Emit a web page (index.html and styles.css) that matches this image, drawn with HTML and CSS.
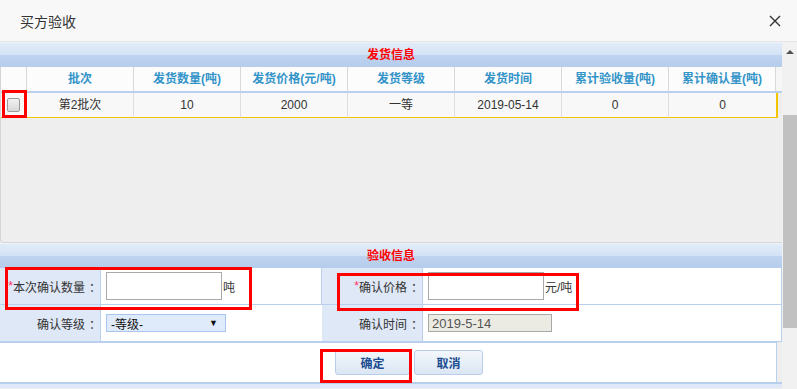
FILE: index.html
```html
<!DOCTYPE html>
<html lang="zh-CN">
<head>
    <meta charset="UTF-8">
    <title>买方验收</title>
    <link rel="stylesheet" href="styles.css">
</head>
<body>
    <div class="dialog">
        <div class="dialog-head">
            <span class="dialog-title">买方验收</span>
            <svg class="close" width="12" height="12" viewBox="0 0 12 12">
                <path d="M1 1L11 11M11 1L1 11" stroke="#333" stroke-width="1.4" fill="none"/>
            </svg>
        </div>

        <div class="dialog-body">
            <div class="content">
                <div class="bar">发货信息</div>

                <div class="grid-box">
                    <div class="grid-row grid-head">
                        <div class="cell"></div>
                        <div class="cell">批次</div>
                        <div class="cell">发货数量(吨)</div>
                        <div class="cell">发货价格(元/吨)</div>
                        <div class="cell">发货等级</div>
                        <div class="cell">发货时间</div>
                        <div class="cell">累计验收量(吨)</div>
                        <div class="cell">累计确认量(吨)</div>
                        <div class="cell fill"></div>
                    </div>
                    <div class="grid-row grid-data">
                        <div class="cell"><span class="checkbox"></span></div>
                        <div class="cell">第2批次</div>
                        <div class="cell">10</div>
                        <div class="cell">2000</div>
                        <div class="cell">一等</div>
                        <div class="cell">2019-05-14</div>
                        <div class="cell">0</div>
                        <div class="cell last">0</div>
                        <div class="cell fill"></div>
                    </div>
                </div>

                <div class="bar">验收信息</div>

                <div class="form">
                    <div class="label"><span class="req">*</span>本次确认数量<span class="colon">：</span></div>
                    <div class="value"><input class="text" type="text"><span class="unit">吨</span></div>
                    <div class="label"><span class="req">*</span>确认价格<span class="colon">：</span></div>
                    <div class="value"><input class="text" type="text"><span class="unit">元/吨</span></div>

                    <div class="label">确认等级<span class="colon">：</span></div>
                    <div class="value">
                        <div class="select"><span>-等级-</span><span class="caret">&#9660;</span></div>
                    </div>
                    <div class="label">确认时间<span class="colon">：</span></div>
                    <div class="value"><input class="text date" type="text" value="2019-5-14" disabled></div>
                </div>

                <div class="actions">
                    <button class="btn btn-ok">确定</button>
                    <button class="btn">取消</button>
                </div>
                <div class="bar-edge"></div>

                <!-- red annotation boxes -->
                <div class="mark mark-check"></div>
                <div class="mark mark-qty"></div>
                <div class="mark mark-price"></div>
                <div class="mark mark-ok"></div>
            </div>

            <div class="scrollbar">
                <span class="arrow"></span>
                <div class="thumb"></div>
            </div>
        </div>
    </div>
</body>
</html>
```

FILE: styles.css
```css
body {
    margin: 0;
    font-family: "Liberation Sans", "Noto Sans CJK SC", sans-serif;
    font-size: 12px;
    color: #333;
    background-color: #fff;
}

.dialog {
    width: 797px;
    height: 389px;
    overflow: hidden;
}

.dialog-head {
    height: 41px;
    display: flex;
    align-items: center;
    justify-content: space-between;
    padding: 0 16px 0 20px;
    background-color: #f8f8f8;
    border-bottom: 1px solid #e6e6e6;
}

.dialog-title {
    font-size: 14px;
    color: #333;
}

.dialog-body {
    display: flex;
    height: 347px;
}

.content {
    position: relative;
    width: 782px;
    background-color: #eeeeee;
}

/* Section title bar */
.bar {
    height: 24px;
    line-height: 24px;
    text-align: center;
    font-weight: bold;
    color: #ff0000;
    border-top: 1px solid #eef3fb;
    background: linear-gradient(to bottom, #e2ecf8 0%, #d3e2f5 50%, #bed3ef 52%, #b5ccec 100%);
}

/* Delivery grid */
.grid-box {
    height: 176px;
    border-left: 1px solid #d6d6d6;
    border-bottom: 1px solid #d6d6d6;
    border-bottom-left-radius: 4px;
    box-sizing: border-box;
}

.grid-row {
    display: grid;
    grid-template-columns: 26px repeat(7, 107px) 1fr;
}

.grid-row .cell {
    height: 24px;
    line-height: 24px;
    text-align: center;
    white-space: nowrap;
    box-sizing: border-box;
}

.grid-head {
    border-bottom: 2px solid #b9cfec;
}

.grid-head .cell {
    font-weight: bold;
    color: #3394c9;
    background-color: #fcfcfc;
    border-right: 1px solid #d8d8d8;
}

.grid-head .cell.fill {
    border-right: none;
    background-color: #f6f6f6;
}

.grid-data .cell {
    height: 25px;
    background-color: #f8f8f8;
    border-right: 1px solid #dedede;
    border-bottom: 1px solid #f4c400;
}

.grid-data .cell.last {
    width: 109px;
    border-right: 2px solid #f4c400;
}

.grid-data .cell.fill {
    background: none;
    border: none;
}

.checkbox {
    display: inline-block;
    width: 11px;
    height: 12px;
    margin-top: 5px;
    vertical-align: top;
    border: 1px solid #9a9a9a;
    border-radius: 2px;
    background: linear-gradient(to bottom, #f2f2f2, #d8d8d8);
}

/* Acceptance form */
.form {
    display: grid;
    grid-template-columns: 101px 221px 101px 1fr;
    grid-auto-rows: 37px;
    background-color: #fff;
    border-right: 1px solid #b9cfee;
}

.form .label, .form .value {
    display: flex;
    align-items: center;
    border-bottom: 1px solid #b9cfee;
    box-sizing: border-box;
}

.form .label {
    justify-content: flex-end;
    padding-right: 3px;
    background-color: #dfe8f6;
    border-right: 1px solid #b9cfee;
}

.colon {
    margin: 0 -4px 0 4px;
}

.form .value {
    padding-left: 5px;
}

.form .value:nth-child(2) {
    border-right: 1px solid #b9cfee;
}

.req {
    color: #ff3366;
}

.text {
    width: 108px;
    height: 26px;
    padding: 0 3px;
    border: 1px solid #a9a9a9;
    font-family: inherit;
    font-size: 13px;
    box-sizing: content-box;
}

.unit {
    margin-left: 1px;
}

.text.date {
    width: 116px;
    height: 16px;
    color: #555;
    background-color: #ebebe4;
}

.select {
    width: 107px;
    height: 16px;
    display: flex;
    align-items: center;
    justify-content: space-between;
    padding: 0 7px 0 4px;
    border: 1px solid #a7c5ee;
    background-color: #dfeafa;
    color: #111;
}

.caret {
    font-size: 9px;
}

.actions {
    height: 40px;
    width: 777px;
    display: flex;
    align-items: center;
    gap: 4px;
    padding-left: 335px;
    box-sizing: border-box;
    background-color: #fff;
    border-top: 1px solid #b9cfee;
    border-right: 1px solid #b9cfee;
}

.btn {
    width: 69px;
    height: 25px;
    padding: 0;
    font-family: inherit;
    font-size: 12px;
    font-weight: bold;
    color: #1a4c8f;
    border: 1px solid #b8cde9;
    border-radius: 3px;
    background: linear-gradient(to bottom, #f3f7fc, #dbe6f4);
    cursor: pointer;
}

.btn-ok {
    width: 75px;
}

.bar-edge {
    height: 4px;
    border-top: 2px solid #b9cfee;
    background-color: #dfe8f6;
}

/* Red highlight boxes drawn over the form */
.mark {
    position: absolute;
    border: 3px solid #ff0000;
    box-sizing: border-box;
}

.mark-check {
    left: 2px;
    top: 48px;
    width: 25px;
    height: 28px;
}

.mark-qty {
    left: 5px;
    top: 225px;
    width: 247px;
    height: 43px;
}

.mark-price {
    left: 337px;
    top: 231px;
    width: 242px;
    height: 38px;
}

.mark-ok {
    left: 320px;
    top: 307px;
    width: 92px;
    height: 34px;
}

/* Scrollbar */
.scrollbar {
    position: relative;
    width: 15px;
    background-color: #f1f1f1;
}

.arrow {
    position: absolute;
    left: 4px;
    top: 8px;
    border-left: 4px solid transparent;
    border-right: 4px solid transparent;
    border-bottom: 4px solid #505050;
}

.thumb {
    position: absolute;
    left: 1px;
    right: 0;
    top: 73px;
    height: 213px;
    background-color: #c1c1c1;
}
```
